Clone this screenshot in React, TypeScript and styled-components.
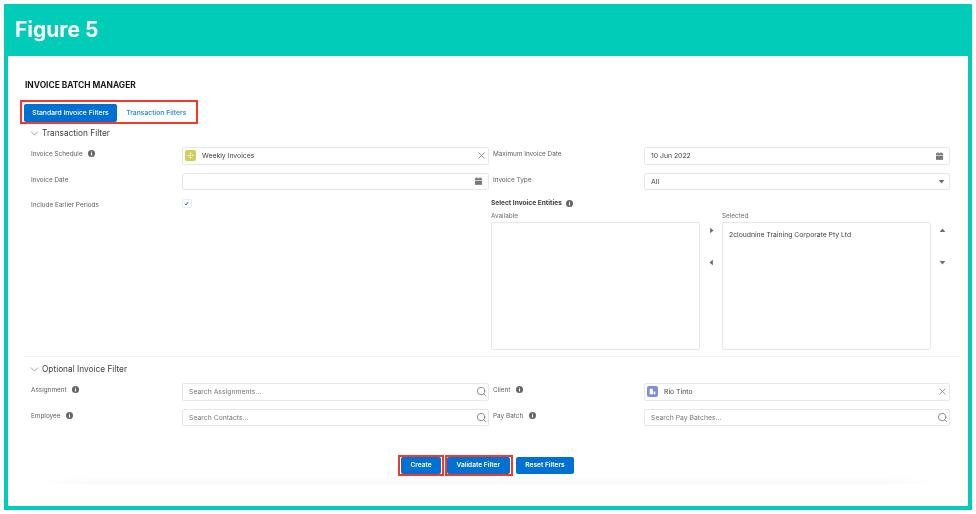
import React from "react";
import styled, { createGlobalStyle } from "styled-components";
import { ChevronDown, Search, X } from "lucide-react";

const Global = createGlobalStyle`
  html, body { margin: 0; padding: 0; background: #fff; }
  body { font-family: Inter, "Liberation Sans", sans-serif; color: #3e3e3c; overflow: hidden; }
  * { box-sizing: border-box; }
`;

const Frame = styled.div`
  margin: 4px;
  width: 968px;
  height: 506px;
  display: flex;
  flex-direction: column;
  border: solid #00ccb8;
  border-width: 0 4px 4px 4px;
  background: #fff;
  will-change: transform;
`;
const Header = styled.header`
  height: 52px;
  margin: 0 -4px;
  padding: 0 11px;
  background: #00ccb8;
  display: flex;
  align-items: center;
`;
const HeaderTitle = styled.h1`
  margin: 0 0 2px;
  color: #fff;
  font: 700 21px/1 Inter, sans-serif;
`;
const Body = styled.main`
  flex: 1;
  padding: 24px 0 0 0;
  display: flex;
  flex-direction: column;
`;
const PageTitle = styled.h2`
  margin: 0 0 0 17px;
  height: 11px;
  font: 700 8.4px/11px Inter, sans-serif;
  color: #16181a;
`;
const Highlight = styled.div<{ $pad: string }>`
  display: inline-flex;
  border: 2px solid #f4392b;
  padding: ${(p) => p.$pad};
`;
const TabBox = styled(Highlight)`
  align-self: flex-start;
  margin: 9px 0 0 12px;
  height: 24px;
`;
const Tab = styled.div<{ $active?: boolean }>`
  height: 18px;
  border-radius: 2px;
  display: flex;
  align-items: center;
  justify-content: center;
  font: 500 6.8px/1 Inter, sans-serif;
  width: ${(p) => (p.$active ? "93px" : "78.5px")};
  background: ${(p) => (p.$active ? "#0070d2" : "transparent")};
  color: ${(p) => (p.$active ? "#fff" : "#1b84e6")};
`;
const SectionHead = styled.div<{ $top: number }>`
  display: flex;
  align-items: center;
  gap: 1px;
  margin: ${(p) => p.$top}px 0 0 20px;
  height: 13px;
  color: #3e3e3c;
  font: 400 8.3px/13px Inter, sans-serif;
  svg { color: #6b6d70; }
`;
const Columns = styled.div`
  display: grid;
  grid-template-columns: 458px 457px;
  column-gap: 4px;
  margin-left: 23px;
`;
const Stack = styled.div`
  display: flex;
  flex-direction: column;
`;
const TopColumns = styled(Columns)`
  margin-top: 7px;
  height: 205px;
`;
const OptionalColumns = styled(Columns)`
  margin-top: 7px;
`;
const Row = styled.div`
  display: grid;
  grid-template-columns: 151px 1fr;
  height: 17.5px;
  margin-bottom: 8.2px;
`;
const Label = styled.div`
  display: flex;
  align-items: flex-start;
  gap: 5.5px;
  padding-top: 3px;
  font: 400 6.4px/9px Inter, sans-serif;
  color: #616264;
`;
const Input = styled.div`
  height: 17.5px;
  display: flex;
  align-items: center;
  border: 1px solid #e8e8e8;
  border-radius: 2px;
  padding: 0 6px;
  background: #fff;
  font: 400 6.85px/1 Inter, sans-serif;
  color: #3e3e3c;
`;
const Value = styled.span`
  flex: 1;
  padding-top: 1px;
`;
const Placeholder = styled(Value)`
  color: #77787a;
`;
const LookupIcon = styled.span<{ $bg: string }>`
  width: 11px;
  height: 11px;
  border-radius: 2px;
  margin: 0 6.5px 0 -4.5px;
  background: ${(p) => p.$bg};
  display: flex;
  align-items: center;
  justify-content: center;
`;
const CheckBox = styled.div`
  width: 9.5px;
  height: 9px;
  margin-top: 1px;
  border: 1px solid #ececec;
  border-radius: 2px;
  display: flex;
  align-items: center;
  justify-content: center;
`;
const Dual = styled.div`
  margin: 0.5px 0 0 -2px;
  display: flex;
  flex-direction: column;
`;
const DualTitle = styled.div`
  display: flex;
  align-items: center;
  gap: 4px;
  height: 9px;
  font: 700 6.6px/9px Inter, sans-serif;
  color: #3e3e3c;
`;
const DualBody = styled.div`
  display: grid;
  grid-template-columns: 209px 22px 209px 22px;
  margin-top: 4px;
`;
const ListLabel = styled.div`
  height: 9px;
  margin-bottom: 1px;
  font: 400 6.4px/9px Inter, sans-serif;
  color: #6c6d6f;
`;
const ListBox = styled.div`
  height: 128px;
  border: 1px solid #e8e8e8;
  border-radius: 2px;
  padding: 7.5px 6px;
  font: 400 6.8px/9px Inter, sans-serif;
  color: #3e3e3c;
`;
const ArrowCol = styled.div`
  padding-top: 15px;
  display: flex;
  flex-direction: column;
  align-items: center;
  gap: 25px;
`;
const Divider = styled.hr`
  margin: 4px 8px 0 15px;
  border: 0;
  border-top: 1px solid #f0f0f0;
`;
const Actions = styled.div`
  display: flex;
  justify-content: center;
  align-items: center;
  margin-top: 20.5px;
  padding-right: 4px;
`;
const ButtonBox = styled(Highlight)`
  & + & {
    margin-left: 1.5px;
  }
`;
const Button = styled.button<{ $w: number }>`
  height: 17.5px;
  width: ${(p) => p.$w}px;
  border: 0;
  padding: 0;
  border-radius: 2px;
  background: #0070d2;
  color: #fff;
  font: 600 6.6px/1 Inter, sans-serif;
`;
const PlainButton = styled(Button)`
  margin-left: 3.5px;
`;
const Fade = styled.div`
  height: 8px;
  margin: 0 32px;
  background: linear-gradient(#fff, #f8f8f8);
  mask-image: linear-gradient(to right, transparent, #000 6%, #000 94%, transparent);
`;

const Info = ({ size = 7 }: { size?: number }) => (
  <svg width={size} height={size} viewBox="0 0 10 10">
    <circle cx="5" cy="5" r="5" fill="#626467" />
    <rect x="4.200" y="4.200" width="1.600" height="3.600" fill="#fff" />
    <rect x="4.200" y="2.200" width="1.600" height="1.400" fill="#fff" />
  </svg>
);
const Calendar = () => (
  <svg width="7" height="8" viewBox="0 0 10 11">
    <path d="M2 0h1.500v1.500H6.500V0H8v1.500h2V4H0V1.500h2z" fill="#77787a" />
    <path d="M0 5h10v6H0z" fill="#77787a" />
  </svg>
);
const Triangle = ({ dir }: { dir: "left" | "right" | "up" | "down" }) => {
  const d = { left: "M7 1v8L2 5z", right: "M3 1v8l5-4z", up: "M1 7h8L5 2z", down: "M1 3h8L5 8z" }[dir];
  return (
    <svg width="7" height="7" viewBox="0 0 10 10">
      <path d={d} fill="#6b6d70" />
    </svg>
  );
};
const CaretEnd = styled.span`
  display: flex;
  margin-right: -2px;
`;
const LensEnd = styled.span`
  display: flex;
  margin-right: -4.5px;
`;
const ClearEnd = styled.span`
  display: flex;
  margin-right: -5px;
`;
const Lens = () => (
  <LensEnd>
    <Search size={11} color="#6b6d70" strokeWidth={1.7} />
  </LensEnd>
);
const Clear = () => (
  <ClearEnd>
    <X size={11} color="#6b6d70" strokeWidth={1.5} />
  </ClearEnd>
);
const Chevron = () => <ChevronDown size={13} strokeWidth={1.2} />;

const Field = ({ label, info, children }: { label: string; info?: boolean; children: React.ReactNode }) => (
  <Row>
    <Label>
      {label}
      {info && <Info />}
    </Label>
    {children}
  </Row>
);

export default function App() {
  return (
    <>
      <Global />
      <Frame>
        <Header>
          <HeaderTitle>Figure 5</HeaderTitle>
        </Header>
        <Body>
          <PageTitle>INVOICE BATCH MANAGER</PageTitle>
          <TabBox $pad="2px 0 2px 2px">
            <Tab $active>Standard Invoice Filters</Tab>
            <Tab>Transaction Filters</Tab>
          </TabBox>
          <SectionHead $top={3}>
            <Chevron />
            Transaction Filter
          </SectionHead>
          <TopColumns>
            <Stack>
              <Field label="Invoice Schedule" info>
                <Input>
                  <LookupIcon $bg="#cfd05b">
                    <svg width="7" height="7" viewBox="0 0 10 10">
                      <path d="M5 .5 6.500 2.500h-3zM5 9.500 3.500 7.500h3zM.5 5l2-1.500v3zM9.500 5l-2 1.500v-3z" fill="#fff" />
                      <circle cx="5" cy="5" r="1.200" fill="#fff" />
                    </svg>
                  </LookupIcon>
                  <Value>Weekly Invoices</Value>
                  <Clear />
                </Input>
              </Field>
              <Field label="Invoice Date">
                <Input>
                  <Value />
                  <Calendar />
                </Input>
              </Field>
              <Field label="Include Earlier Periods">
                <CheckBox>
                  <svg width="5" height="5" viewBox="0 0 10 10">
                    <path d="M1.500 5.500 4 8l4.500-6" fill="none" stroke="#1b6fd0" strokeWidth="2" />
                  </svg>
                </CheckBox>
              </Field>
            </Stack>
            <Stack>
              <Field label="Maximum Invoice Date">
                <Input>
                  <Value>10 Jun 2022</Value>
                  <Calendar />
                </Input>
              </Field>
              <Field label="Invoice Type">
                <Input>
                  <Value>All</Value>
                  <CaretEnd>
                    <Triangle dir="down" />
                  </CaretEnd>
                </Input>
              </Field>
              <Dual>
                <DualTitle>
                  Select Invoice Entities
                  <Info />
                </DualTitle>
                <DualBody>
                  <div>
                    <ListLabel>Available</ListLabel>
                    <ListBox />
                  </div>
                  <ArrowCol>
                    <Triangle dir="right" />
                    <Triangle dir="left" />
                  </ArrowCol>
                  <div>
                    <ListLabel>Selected</ListLabel>
                    <ListBox>2cloudnine Training Corporate Pty Ltd</ListBox>
                  </div>
                  <ArrowCol>
                    <Triangle dir="up" />
                    <Triangle dir="down" />
                  </ArrowCol>
                </DualBody>
              </Dual>
            </Stack>
          </TopColumns>
          <Divider />
          <SectionHead $top={6}>
            <Chevron />
            Optional Invoice Filter
          </SectionHead>
          <OptionalColumns>
            <Stack>
              <Field label="Assignment" info>
                <Input>
                  <Placeholder>Search Assignments...</Placeholder>
                  <Lens />
                </Input>
              </Field>
              <Field label="Employee" info>
                <Input>
                  <Placeholder>Search Contacts...</Placeholder>
                  <Lens />
                </Input>
              </Field>
            </Stack>
            <Stack>
              <Field label="Client" info>
                <Input>
                  <LookupIcon $bg="#7f8de1">
                    <svg width="7" height="7" viewBox="0 0 10 10">
                      <path d="M1 1h4.500v8H1zM6.500 5H9v4H6.500z" fill="#fff" />
                    </svg>
                  </LookupIcon>
                  <Value>Rio Tinto</Value>
                  <Clear />
                </Input>
              </Field>
              <Field label="Pay Batch" info>
                <Input>
                  <Placeholder>Search Pay Batches...</Placeholder>
                  <Lens />
                </Input>
              </Field>
            </Stack>
          </OptionalColumns>
          <Actions>
            <ButtonBox $pad="0 0.5px 0 1px">
              <Button $w={40}>Create</Button>
            </ButtonBox>
            <ButtonBox $pad="0 1px 0 0">
              <Button $w={62.5}>Validate Filter</Button>
            </ButtonBox>
            <PlainButton $w={58}>Reset Filters</PlainButton>
          </Actions>
          <Fade />
        </Body>
      </Frame>
    </>
  );
}
